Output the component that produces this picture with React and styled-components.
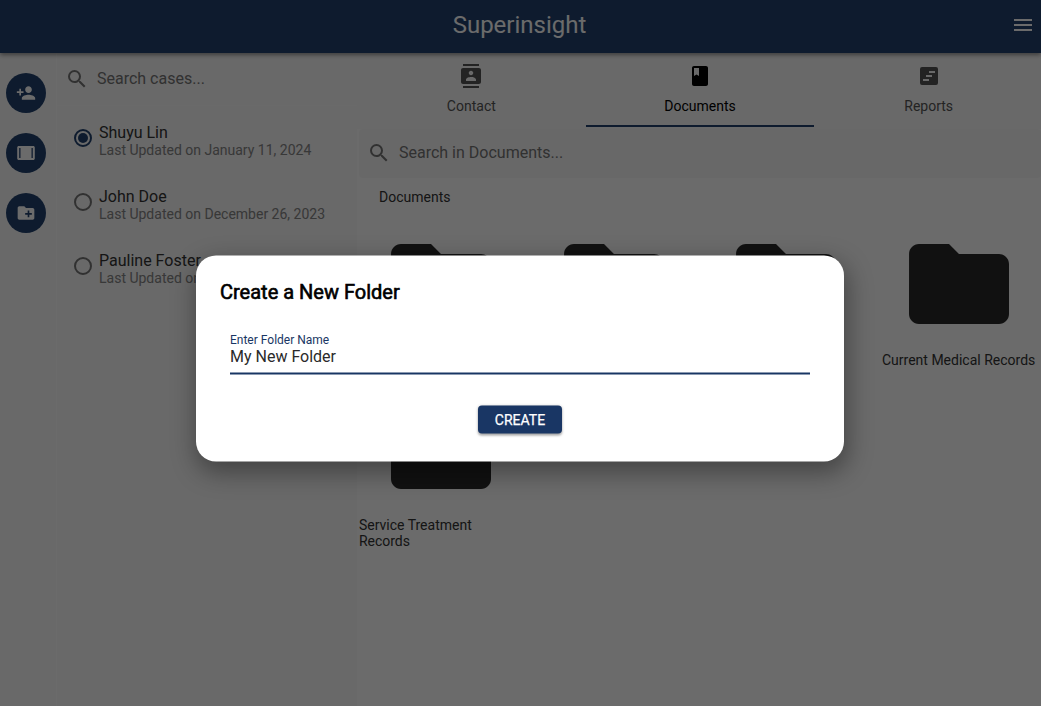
import React from "react";
import styled, { createGlobalStyle } from "styled-components";
import { MdPersonAdd, MdCreateNewFolder, MdSearch, MdMenu, MdContacts, MdClass, MdFolder } from "react-icons/md";

const Global = createGlobalStyle`
  *, *::before, *::after { box-sizing: border-box; }
  body { margin: 0; font-family: Roboto, "Liberation Sans", sans-serif; overflow: hidden; }
`;
const Page = styled.div`
  position: relative;
  height: 706px;
  display: flex;
  flex-direction: column;
  overflow: hidden;
  background: #fff;
  color: rgba(0, 0, 0, 0.87);
`;
const Header = styled.header`
  z-index: 1;
  display: grid;
  grid-template-columns: 48px 1fr 48px;
  align-items: center;
  flex: none;
  height: 53px;
  padding: 0 0 3px;
  background: #22426f;
  color: #fff;
  box-shadow: 0 2px 4px rgba(0, 0, 0, 0.3), 0 1px 6px rgba(0, 0, 0, 0.2);
`;
const Brand = styled.h1`
  grid-column: 2;
  margin: 0;
  text-align: center;
  font-size: 24px;
  font-weight: 400;
  line-height: 32px;
  padding-right: 2px;
`;
const MenuButton = styled.div`
  display: flex;
  justify-content: center;
  padding-left: 12px;
  font-size: 24px;
`;
const Body = styled.div`
  display: flex;
  flex: 1;
  min-height: 0;
`;
const Rail = styled.nav`
  display: flex;
  flex-direction: column;
  gap: 20px;
  flex: none;
  width: 57px;
  padding: 20px 6px;
  background: #fafafa;
  border-right: 1px solid #fefefe;
`;
const RailButton = styled.div`
  display: flex;
  align-items: center;
  justify-content: center;
  width: 40px;
  height: 40px;
  border-radius: 50%;
  background: #22426f;
  color: #fff;
  font-size: 20px;
`;
const Cases = styled.aside`
  flex: none;
  width: 300px;
  background: #f9f9f9;
`;
const SearchBar = styled.div`
  display: flex;
  align-items: center;
  gap: 8px;
  color: #757575;
  font-size: 16px;
  svg { font-size: 24px; }
`;
const CaseSearch = styled(SearchBar)`
  height: 53px;
  padding: 0 0 1px 8px;
  background: #fafafa;
  border-bottom: 1px solid #fdfdfd;
  line-height: 20px;
`;
const DocumentSearch = styled(SearchBar)`
  height: 49px;
  margin-left: 2px;
  padding: 0 0 2px 8px;
  border-radius: 4px;
  background: #f8f8f8;
`;
const CaseRow = styled.div`
  display: flex;
  gap: 7px;
  height: 64px;
  padding: 17px 0 0 17px;
`;
const Radio = styled.div`
  display: flex;
  align-items: center;
  justify-content: center;
  width: 18px;
  height: 18px;
  margin-top: 6px;
  border: 2px solid ${(p) => (p.$on ? "#22426f" : "#757575")};
  border-radius: 50%;
  &::after {
    content: "";
    width: 10px;
    height: 10px;
    border-radius: 50%;
    background: ${(p) => (p.$on ? "#22426f" : "transparent")};
  }
`;
const CaseName = styled.div`
  font-size: 16px;
  line-height: 19px;
  color: #333;
`;
const CaseDate = styled.div`
  font-size: 14px;
  line-height: 16px;
  color: #858585;
`;
const Main = styled.main`
  flex: 1;
  min-width: 0;
  background: #fefefe;
`;
const Tabs = styled.div`
  display: flex;
  width: 686px;
  height: 76px;
  background: #fafafa;
`;
const Tab = styled.div`
  display: flex;
  flex-direction: column;
  align-items: center;
  gap: 10px;
  flex: 1;
  padding-top: 11px;
  height: 74px;
  border-bottom: 2px solid ${(p) => (p.$active ? "#22426f" : "transparent")};
  font-size: 14px;
  line-height: 16px;
  color: ${(p) => (p.$active ? "#000" : "#555")};
  svg { font-size: 24px; }
`;
const SectionTitle = styled.div`
  padding: 11px 22px 0;
  font-size: 14px;
  line-height: 16px;
  color: #333;
`;
const Folders = styled.div`
  display: grid;
  grid-template-columns: repeat(4, 172.5px);
  grid-auto-rows: 165px;
  padding: 19px 0 0 1.9px;
`;
const Folder = styled.div`
  display: flex;
  flex-direction: column;
  align-items: center;
  padding-right: 8px;
  font-size: 14px;
  line-height: 16px;
  color: #333;
  svg { flex: none; width: 120px; height: 120px; color: #292929; }
`;
const FolderName = styled.div`
  width: 100%;
  margin-top: 8px;
  text-align: ${(p) => p.$align || "center"};
`;
const Backdrop = styled.div`
  position: absolute;
  inset: 0;
  z-index: 2;
  display: flex;
  justify-content: center;
  align-items: center;
  padding: 11px 1px 0 0;
  background: rgba(0, 0, 0, 0.58);
`;
const Dialog = styled.section`
  width: 648px;
  height: 206px;
  padding: 24px;
  border-radius: 20px;
  background: #fff;
  box-shadow: 2px 9px 24px 2px rgba(0, 0, 0, 0.36);
  transform: translateY(-0.5px);
`;
const DialogTitle = styled.h2`
  margin: 0;
  font-size: 20px;
  font-weight: 400;
  line-height: 25px;
  color: #000;
  -webkit-text-stroke: 0.6px #000;
`;
const Field = styled.div`
  height: 44px;
  margin: 26px 10px 0;
  padding-top: 2px;
  border-bottom: 2px solid #193664;
`;
const Label = styled.div`
  font-size: 12px;
  line-height: 14px;
  color: #193664;
`;
const Value = styled.div`
  font-size: 16px;
  line-height: 20px;
  color: #2a2a2a;
`;
const Create = styled.button`
  display: block;
  width: 84px;
  height: 28px;
  margin: 31px auto 0;
  padding: 0;
  border: 0;
  border-radius: 4px;
  background: #193664;
  color: #fff;
  font: 400 14px/28px Roboto, sans-serif;
  -webkit-text-stroke: 0.25px #fff;
  box-shadow: 0 1px 3px rgba(0, 0, 0, 0.3), 0 2px 2px rgba(0, 0, 0, 0.12);
`;

const ReportIcon = () => (
  <svg width="24" height="24" viewBox="0 0 24 24" fill="currentColor">
    <path fillRule="evenodd" d="M5 3h14a2 2 0 0 1 2 2v14a2 2 0 0 1-2 2H5a2 2 0 0 1-2-2V5a2 2 0 0 1 2-2zM12 7v2h6V7zM9 11v2h6v-2zM6 15v2h6v-2z" />
  </svg>
);
const PanelIcon = () => (
  <svg width="20" height="20" viewBox="0 0 20 20" fill="currentColor">
    <path fillRule="evenodd" d="M2.7 3h14.6c.8 0 1.5.7 1.5 1.5v11c0 .8-.7 1.5-1.5 1.5H2.7c-.8 0-1.5-.7-1.5-1.5v-11C1.2 3.700 1.900 3 2.700 3zM3.200 5v10h1.300V5zM15.500 5v10h1.300V5z" />
  </svg>
);

const cases = [
  ["Shuyu Lin", "January 11, 2024"],
  ["John Doe", "December 26, 2023"],
  ["Pauline Foster", ""],
];
const folders = ["", "", "", "Current Medical Records", "Service Treatment Records"];

export default function App() {
  return (
    <>
      <Global />
      <Page>
        <Header>
          <Brand>Superinsight</Brand>
          <MenuButton><MdMenu /></MenuButton>
        </Header>
        <Body>
          <Rail>
            <RailButton><MdPersonAdd /></RailButton>
            <RailButton><PanelIcon /></RailButton>
            <RailButton><MdCreateNewFolder /></RailButton>
          </Rail>
          <Cases>
            <CaseSearch><MdSearch />Search cases...</CaseSearch>
            {cases.map(([name, date], i) => (
              <CaseRow key={name}>
                <Radio $on={i === 0} />
                <div>
                  <CaseName>{name}</CaseName>
                  <CaseDate>Last Updated on {date}</CaseDate>
                </div>
              </CaseRow>
            ))}
          </Cases>
          <Main>
            <Tabs>
              <Tab><MdContacts />Contact</Tab>
              <Tab $active><MdClass />Documents</Tab>
              <Tab><ReportIcon />Reports</Tab>
            </Tabs>
            <DocumentSearch><MdSearch />Search in Documents...</DocumentSearch>
            <SectionTitle>Documents</SectionTitle>
            <Folders>
              {folders.map((name, i) => (
                <Folder key={i}>
                  <MdFolder />
                  <FolderName $align={i === 4 ? "left" : "center"}>{name}</FolderName>
                </Folder>
              ))}
            </Folders>
          </Main>
        </Body>
        <Backdrop>
          <Dialog>
            <DialogTitle>Create a New Folder</DialogTitle>
            <Field>
              <Label>Enter Folder Name</Label>
              <Value>My New Folder</Value>
            </Field>
            <Create>CREATE</Create>
          </Dialog>
        </Backdrop>
      </Page>
    </>
  );
}
